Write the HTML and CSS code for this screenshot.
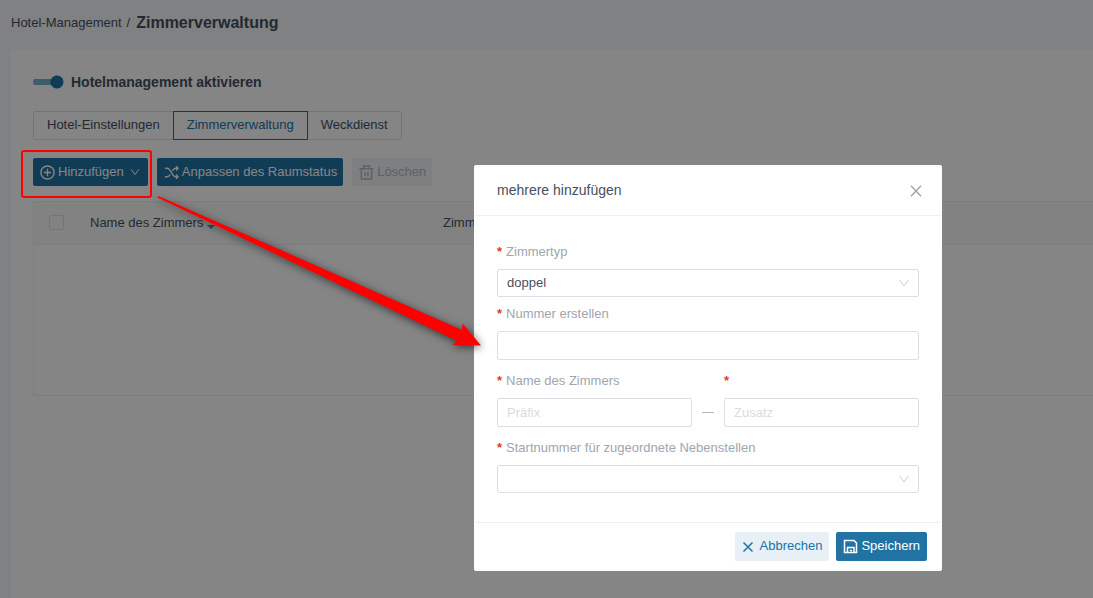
FILE: index.html
```html
<!DOCTYPE html>
<html lang="de">
<head>
    <meta charset="UTF-8">
    <meta name="viewport" content="width=device-width, initial-scale=1.0">
    <title>Zimmerverwaltung</title>
    <link rel="stylesheet" href="styles.css">
</head>
<body>
    <nav class="breadcrumb">
        <a href="#">Hotel-Management</a>
        <span class="separator">/</span>
        <h1>Zimmerverwaltung</h1>
    </nav>

    <main class="panel">
        <label class="switch">
            <input type="checkbox" role="switch" checked>
            <span>Hotelmanagement aktivieren</span>
        </label>

        <div class="tabs">
            <button type="button" class="tab">Hotel-Einstellungen</button>
            <button type="button" class="tab active">Zimmerverwaltung</button>
            <button type="button" class="tab">Weckdienst</button>
        </div>

        <div class="toolbar">
            <button type="button" class="btn primary">
                <svg class="icon" viewBox="0 0 16 16"><circle cx="8" cy="8" r="7"/><path d="M8 4v8M4 8h8"/></svg>
                <span>Hinzufügen</span>
                <svg class="caret" viewBox="0 0 10 10"><path d="M1.200 2.200L5 7.600l3.800-5.400"/></svg>
            </button>
            <button type="button" class="btn primary">
                <svg class="icon" viewBox="0 0 16 16"><path d="M1 3.500h2.200c1.200 0 2 .6 2.700 1.500l4 6c.6 1 1.400 1.500 2.600 1.500H15M1 12.500h2.200c1.200 0 2-.6 2.700-1.500l.6-1M8.900 6.200L9.800 5c.7-1 1.500-1.500 2.700-1.500H15M12.800 1.200L15 3.500l-2.200 2.300M12.800 10.200l2.200 2.300-2.200 2.300"/></svg>
                <span>Anpassen des Raumstatus</span>
            </button>
            <button type="button" class="btn" disabled>
                <svg class="icon" viewBox="0 0 16 16"><path d="M.5 4h15M4.800 4V1h6.400v3M2.500 4v11h11V4M6.500 7.500v4.500M9.500 7.500v4.500"/></svg>
                <span>Löschen</span>
            </button>
        </div>

        <table class="rooms">
            <thead>
                <tr>
                    <th class="col-check"><input type="checkbox" aria-label="Alle auswählen"></th>
                    <th class="col-name">Name des Zimmers <span class="sort"></span></th>
                    <th>Zimmertyp</th>
                </tr>
            </thead>
            <tbody>
                <tr><td colspan="3"></td></tr>
            </tbody>
        </table>
    </main>

    <div class="overlay">
        <form class="modal" role="dialog" aria-labelledby="modalTitle">
            <header class="modal-header">
                <h2 id="modalTitle">mehrere hinzufügen</h2>
                <button type="button" class="close" aria-label="Schließen">
                    <svg viewBox="0 0 12 12"><path d="M1 .7l10 10.600M11 .7L1 11.300"/></svg>
                </button>
            </header>

            <div class="modal-body">
                <div class="field compact">
                    <label for="roomType"><span class="required">*</span>Zimmertyp</label>
                    <div class="select">
                        <select id="roomType"><option>doppel</option></select>
                        <svg class="caret" viewBox="0 0 10 10"><path d="M.6 2l4.400 6 4.400-6"/></svg>
                    </div>
                </div>
                <div class="field">
                    <label for="count"><span class="required">*</span>Nummer erstellen</label>
                    <input type="text" id="count">
                </div>
                <div class="field-row">
                    <div class="field">
                        <label for="prefix"><span class="required">*</span>Name des Zimmers</label>
                        <input type="text" id="prefix" placeholder="Präfix">
                    </div>
                    <span class="dash"></span>
                    <div class="field">
                        <label for="suffix"><span class="required">*</span></label>
                        <input type="text" id="suffix" placeholder="Zusatz">
                    </div>
                </div>
                <div class="field">
                    <label for="extension"><span class="required">*</span>Startnummer für zugeordnete Nebenstellen</label>
                    <div class="select">
                        <select id="extension"><option></option></select>
                        <svg class="caret" viewBox="0 0 10 10"><path d="M.6 2l4.400 6 4.400-6"/></svg>
                    </div>
                </div>
            </div>

            <footer class="modal-footer">
                <button type="button" class="btn light">
                    <svg class="icon small" viewBox="0 0 12 12"><path d="M1.500 1.500l9 9M10.500 1.500l-9 9"/></svg>
                    <span>Abbrechen</span>
                </button>
                <button type="submit" class="btn primary">
                    <svg class="icon" viewBox="0 0 15 15"><path d="M1.500 1.500h9.500l2.500 2.500v9.500h-12zM4.500 13.500v-5h6.500v5M7 11.500h2"/></svg>
                    <span>Speichern</span>
                </button>
            </footer>
        </form>
    </div>

    <!-- Markierung und Pfeil -->
    <div class="highlight"></div>
    <svg class="arrow" viewBox="0 0 340 170" width="340" height="170">
        <path d="M8.500 6L312 140l.5-6.500 18.500 22-28.500-.5 4.500-4L7.500 7.500z"/>
    </svg>
</body>
</html>
```

FILE: styles.css
```css
* {
    box-sizing: border-box;
}
body {
    display: flex;
    flex-direction: column;
    min-height: 100vh;
    margin: 0;
    background: #f4f7fa;
    color: #45505e;
    font-family: "Liberation Sans", Arial, sans-serif;
    font-size: 13px;
    line-height: 20px;
}
button, input, select {
    font: inherit;
    color: inherit;
}
svg {
    fill: none;
    stroke: currentColor;
}

/* page */
.breadcrumb {
    display: flex;
    align-items: center;
    height: 50px;
    padding: 0 11px 4px;
}
.breadcrumb a {
    color: inherit;
    text-decoration: none;
}
.separator {
    margin: 0 6px 0 5px;
}
.breadcrumb h1 {
    margin: 0;
    font-size: 16px;
}
.panel {
    flex: 1;
    margin-left: 11px;
    padding: 22px 0 0 22px;
    background: #fff;
}
.switch {
    display: flex;
    align-items: center;
    gap: 7px;
    font-size: 14px;
    font-weight: bold;
}
.switch input {
    appearance: none;
    width: 31px;
    height: 14px;
    margin: 0;
    border-radius: 7px;
    background:
        radial-gradient(circle at 24px 7px, #2173a3 6px, transparent 7px),
        linear-gradient(#7ab0cc, #7ab0cc) 3px 4px / 20px 6px no-repeat,
        radial-gradient(circle at 3px 7px, #7ab0cc 3px, transparent 3px);
}
.tabs {
    display: flex;
    margin-top: 19px;
}
.tab {
    height: 29px;
    padding: 0 13px 2px;
    border: 1px solid #dcdfe3;
    background: #fff;
}
.tab + .tab {
    margin-left: -1px;
}
.tab:first-child {
    border-radius: 2px 0 0 2px;
}
.tab:last-child {
    border-radius: 0 2px 2px 0;
}
.tab.active {
    position: relative;
    border-color: #2173a3;
    color: #2173a3;
}
.toolbar {
    display: flex;
    gap: 9px;
    margin-top: 18px;
}
.btn {
    display: flex;
    align-items: center;
    gap: 3px;
    height: 28px;
    padding: 0 6px 0 7px;
    border: none;
    border-radius: 2px;
}
.btn.primary {
    background: #2173a3;
    color: #fff;
}
.btn.light {
    gap: 6px;
    background: #e6f0f6;
    color: #2173a3;
}
.btn:disabled {
    background: #f0f4f5;
    color: #b4b8bd;
}
.icon {
    width: 15px;
    height: 15px;
    stroke-width: 1.5;
}
.icon.small {
    width: 12px;
    height: 12px;
}
.caret {
    width: 10px;
    height: 10px;
}
.btn .caret {
    margin: 0 2px 0 3px;
}
.rooms {
    width: 100%;
    margin-top: 15px;
    border: 1px solid #f0f0f0;
    border-right: none;
    border-spacing: 0;
    table-layout: fixed;
}
.rooms th {
    height: 43px;
    padding: 0;
    border-bottom: 1px solid #f0f0f0;
    background: #fafafa;
    font-weight: normal;
    text-align: left;
}
.rooms td {
    height: 150px;
    padding: 0;
}
.rooms input {
    display: block;
    appearance: none;
    width: 15px;
    height: 15px;
    margin: 0 0 2px 15px;
    border: 1px solid #dcdfe3;
    border-radius: 2px;
}
.col-check {
    width: 56px;
}
.col-name {
    width: 353px;
}
.sort {
    display: inline-block;
    border: 4px solid transparent;
    border-top-color: #7e868f;
    border-bottom: none;
    vertical-align: -2px;
}

/* dialog */
.overlay {
    position: fixed;
    inset: 0;
    display: flex;
    align-items: flex-start;
    justify-content: flex-end;
    padding: 165px 151px 0 0;
    background: rgba(0, 0, 0, 0.48);
}
.modal {
    width: 468px;
    padding: 0 1px;
    border-radius: 2px;
    background: #fff;
}
.modal-header {
    display: flex;
    align-items: center;
    justify-content: space-between;
    height: 51px;
    padding: 0 19px 0 22px;
    border-bottom: 1px solid #eeeff0;
}
.modal-header h2 {
    margin: 0;
    font-size: 14px;
    font-weight: normal;
}
.close {
    display: flex;
    padding: 2px 0 0;
    border: none;
    background: none;
    color: #9ba1aa;
}
.close svg {
    width: 12px;
    height: 12px;
    stroke-width: 1.3;
}
.modal-body {
    padding: 26px 22px 29px;
}
.field {
    display: flex;
    flex: 1;
    flex-direction: column;
    gap: 7px;
    margin-bottom: 11px;
}
.field.compact {
    margin-bottom: 7px;
}
.field:last-child {
    margin-bottom: 0;
}
.field label {
    height: 20px;
    color: #a0a5ae;
}
.required {
    margin-right: 4px;
    color: #e33b24;
    font-weight: bold;
}
.field input, .field select {
    width: 100%;
    height: 29px;
    padding: 0 9px;
    border: 1px solid #dcdee2;
    border-radius: 2px;
    background: #fff;
}
.field input::placeholder {
    color: #d9dce1;
}
.select {
    display: flex;
    align-items: center;
}
.field select {
    appearance: none;
    height: 28px;
}
.select .caret {
    flex: none;
    margin: 0 10px 0 -20px;
    color: #ccced2;
    pointer-events: none;
}
.field-row {
    display: flex;
    margin-bottom: 11px;
}
.field-row .field {
    margin-bottom: 0;
}
.field-row input {
    min-width: 0;
}
.dash {
    align-self: flex-end;
    width: 12px;
    margin: 0 10px 14px;
    border-bottom: 1px solid #b3b5c4;
}
.modal-footer {
    display: flex;
    justify-content: flex-end;
    gap: 7px;
    padding: 9px 14px 10px;
    border-top: 1px solid #eeeff0;
}
.modal-footer .btn {
    height: 29px;
    padding: 0 7px;
}
.modal-footer span {
    padding-bottom: 2px;
}

/* annotations */
.highlight {
    position: absolute;
    top: 150px;
    left: 21px;
    width: 131px;
    height: 48px;
    border: 2px solid #fe0000;
    border-radius: 3px;
}
.arrow {
    position: absolute;
    top: 190px;
    left: 150px;
    overflow: visible;
    filter: drop-shadow(1px 2px 4px rgba(0, 0, 0, 0.6));
    pointer-events: none;
}
.arrow path {
    fill: #fe0000;
    stroke: none;
}
```
